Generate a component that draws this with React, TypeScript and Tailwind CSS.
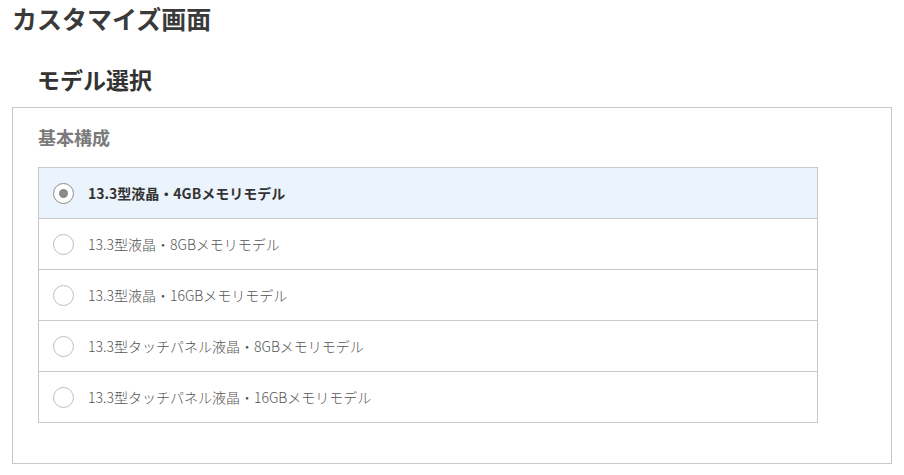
import React from "react";

const items = [
  "13.3型液晶・4GBメモリモデル",
  "13.3型液晶・8GBメモリモデル",
  "13.3型液晶・16GBメモリモデル",
  "13.3型タッチパネル液晶・8GBメモリモデル",
  "13.3型タッチパネル液晶・16GBメモリモデル",
];

export default function App() {
  const selected = 0;
  return (
    <div
      className="w-[904px] h-[475px] bg-white text-[#333]"
      style={{ fontFamily: '"Noto Sans CJK JP", "Noto Sans", sans-serif' }}
    >
      <h1 className="pl-[12px] pt-[1px] h-[34px] text-[25px] leading-[34px] font-bold text-[#3a3a3a]">
        カスタマイズ画面
      </h1>
      <h2 className="pl-[37px] mt-[29px] h-[32px] text-[23px] leading-[32px] font-bold text-[#333]">
        モデル選択
      </h2>
      <div className="ml-[12px] mt-[12px] w-[880px] h-[357px] border border-[#c8c8c8] pl-[25px] pt-[15px]">
        <div className="h-[28px] text-[18px] leading-[28px] font-bold text-[#7a7a7a]">
          基本構成
        </div>
        <div className="mt-[16px] w-[780px] border border-[#c8c8c8]">
          {items.map((t, i) => {
            const sel = i === selected;
            return (
              <div
                key={i}
                className={`flex items-center pl-[14px] ${
                  i > 0 ? "h-[51px] border-t border-[#c8c8c8]" : "h-[50px]"
                } ${sel ? "bg-[#ebf3fd]" : ""}`}
              >
                <span
                  className={`flex items-center justify-center w-[21px] h-[21px] rounded-full border-[1.5px] ${
                    sel ? "border-[#8a8a8a] bg-white" : "border-[#bdbdbd] bg-white"
                  }`}
                >
                  {sel && <span className="w-[9px] h-[9px] rounded-full bg-[#8a8a8a]" />}
                </span>
                <span
                  className={`ml-[14px] text-[14px] ${
                    sel ? "font-bold text-[#333]" : "font-light text-[#555]"
                  }`}
                >
                  {t}
                </span>
              </div>
            );
          })}
        </div>
      </div>
    </div>
  );
}
